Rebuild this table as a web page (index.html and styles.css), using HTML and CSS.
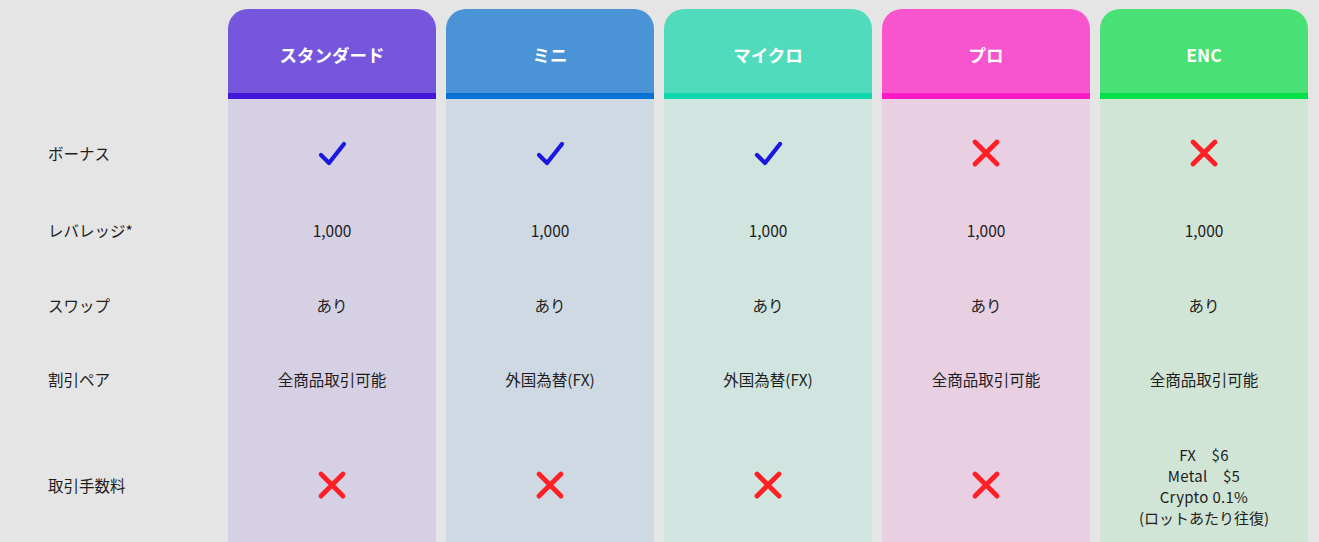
FILE: index.html
```html
<!DOCTYPE html>
<html lang="ja">
<head>
<meta charset="utf-8">
<title>口座タイプ比較</title>
<link rel="stylesheet" href="styles.css">
</head>
<body>
<div class="compare">
  <div class="labels">
    <div class="head-spacer"></div>
    <div class="body">
      <div class="cell r1">ボーナス</div>
      <div class="cell r2">レバレッジ*</div>
      <div class="cell r3">スワップ</div>
      <div class="cell r4">割引ペア</div>
      <div class="cell r5">取引手数料</div>
    </div>
  </div>

  <div class="plan standard">
    <div class="head">スタンダード</div>
    <div class="body">
      <div class="cell r1"><svg class="ico" viewBox="0 0 30 30"><path class="check" d="M4 17 L12 25 L27 6"/></svg></div>
      <div class="cell r2">1,000</div>
      <div class="cell r3">あり</div>
      <div class="cell r4">全商品取引可能</div>
      <div class="cell r5"><svg class="ico" viewBox="0 0 30 30"><path class="cross" d="M4 4 L26 26 M26 4 L4 26"/></svg></div>
    </div>
  </div>

  <div class="plan mini">
    <div class="head">ミニ</div>
    <div class="body">
      <div class="cell r1"><svg class="ico" viewBox="0 0 30 30"><path class="check" d="M4 17 L12 25 L27 6"/></svg></div>
      <div class="cell r2">1,000</div>
      <div class="cell r3">あり</div>
      <div class="cell r4">外国為替(FX)</div>
      <div class="cell r5"><svg class="ico" viewBox="0 0 30 30"><path class="cross" d="M4 4 L26 26 M26 4 L4 26"/></svg></div>
    </div>
  </div>

  <div class="plan micro">
    <div class="head">マイクロ</div>
    <div class="body">
      <div class="cell r1"><svg class="ico" viewBox="0 0 30 30"><path class="check" d="M4 17 L12 25 L27 6"/></svg></div>
      <div class="cell r2">1,000</div>
      <div class="cell r3">あり</div>
      <div class="cell r4">外国為替(FX)</div>
      <div class="cell r5"><svg class="ico" viewBox="0 0 30 30"><path class="cross" d="M4 4 L26 26 M26 4 L4 26"/></svg></div>
    </div>
  </div>

  <div class="plan pro">
    <div class="head">プロ</div>
    <div class="body">
      <div class="cell r1"><svg class="ico" viewBox="0 0 30 30"><path class="cross" d="M4 4 L26 26 M26 4 L4 26"/></svg></div>
      <div class="cell r2">1,000</div>
      <div class="cell r3">あり</div>
      <div class="cell r4">全商品取引可能</div>
      <div class="cell r5"><svg class="ico" viewBox="0 0 30 30"><path class="cross" d="M4 4 L26 26 M26 4 L4 26"/></svg></div>
    </div>
  </div>

  <div class="plan enc">
    <div class="head">ENC</div>
    <div class="body">
      <div class="cell r1"><svg class="ico" viewBox="0 0 30 30"><path class="cross" d="M4 4 L26 26 M26 4 L4 26"/></svg></div>
      <div class="cell r2">1,000</div>
      <div class="cell r3">あり</div>
      <div class="cell r4">全商品取引可能</div>
      <div class="cell r5">
        <div class="multi">
          <div class="latin">FX　$6</div>
          <div class="latin">Metal　$5</div>
          <div class="latin">Crypto 0.1%</div>
          <div>(ロットあたり往復)</div>
        </div>
      </div>
    </div>
  </div>
</div>
</body>
</html>
```

FILE: styles.css
```css
html, body {
  margin: 0;
  padding: 0;
  overflow: hidden;
}
body {
  background: #e5e5e5;
  font-family: "Noto Sans CJK JP", "Noto Sans", sans-serif;
  color: #1e1e22;
  font-size: 15.5px;
}
.compare {
  display: flex;
  gap: 10px;
  padding: 9px 11px 0 0;
}
.labels {
  width: 218px;
  flex: none;
}
.labels .cell {
  justify-content: flex-start;
  padding-left: 48px;
}
.head-spacer {
  height: 90px;
}
.plan {
  width: 208px;
  flex: none;
}
.head {
  box-sizing: border-box;
  height: 90px;
  padding-top: 6px;
  border-radius: 20px 20px 0 0;
  border-bottom: 6px solid transparent;
  display: flex;
  align-items: center;
  justify-content: center;
  color: #fff;
  font-weight: 700;
  font-size: 17.5px;
}
.body {
  padding-top: 15px;
  display: flex;
  flex-direction: column;
}
.cell {
  display: flex;
  align-items: center;
  justify-content: center;
  text-align: center;
  line-height: 21px;
}
.r1 { height: 78px; }
.r2 { height: 76px; }
.r3 { height: 74px; }
.r4 { height: 74px; }
.r5 { height: 138px; }
.multi {
  font-size: 15px;
  white-space: nowrap;
  padding-top: 1px;
}
.latin {
  letter-spacing: 0.3px;
}
.ico {
  width: 30px;
  height: 30px;
  display: block;
}
.check {
  fill: none;
  stroke: #1a17e0;
  stroke-width: 4.2;
  stroke-linecap: round;
  stroke-linejoin: round;
}
.cross {
  fill: none;
  stroke: #ff1f25;
  stroke-width: 4.8;
  stroke-linecap: round;
}

.standard .head { background: #7556dc; border-bottom-color: #4318d9; }
.standard .body { background: #d6d0e5; }
.mini .head { background: #4a93d6; border-bottom-color: #0672d3; }
.mini .body { background: #cfd9e3; }
.micro .head { background: #50dbbd; border-bottom-color: #10d8ae; }
.micro .body { background: #d0e5e0; }
.pro .head { background: #f854ce; border-bottom-color: #ff18c5; }
.pro .body { background: #e8cfe2; }
.enc .head { background: #49e176; border-bottom-color: #03e049; }
.enc .body { background: #d0e5d6; }
```
